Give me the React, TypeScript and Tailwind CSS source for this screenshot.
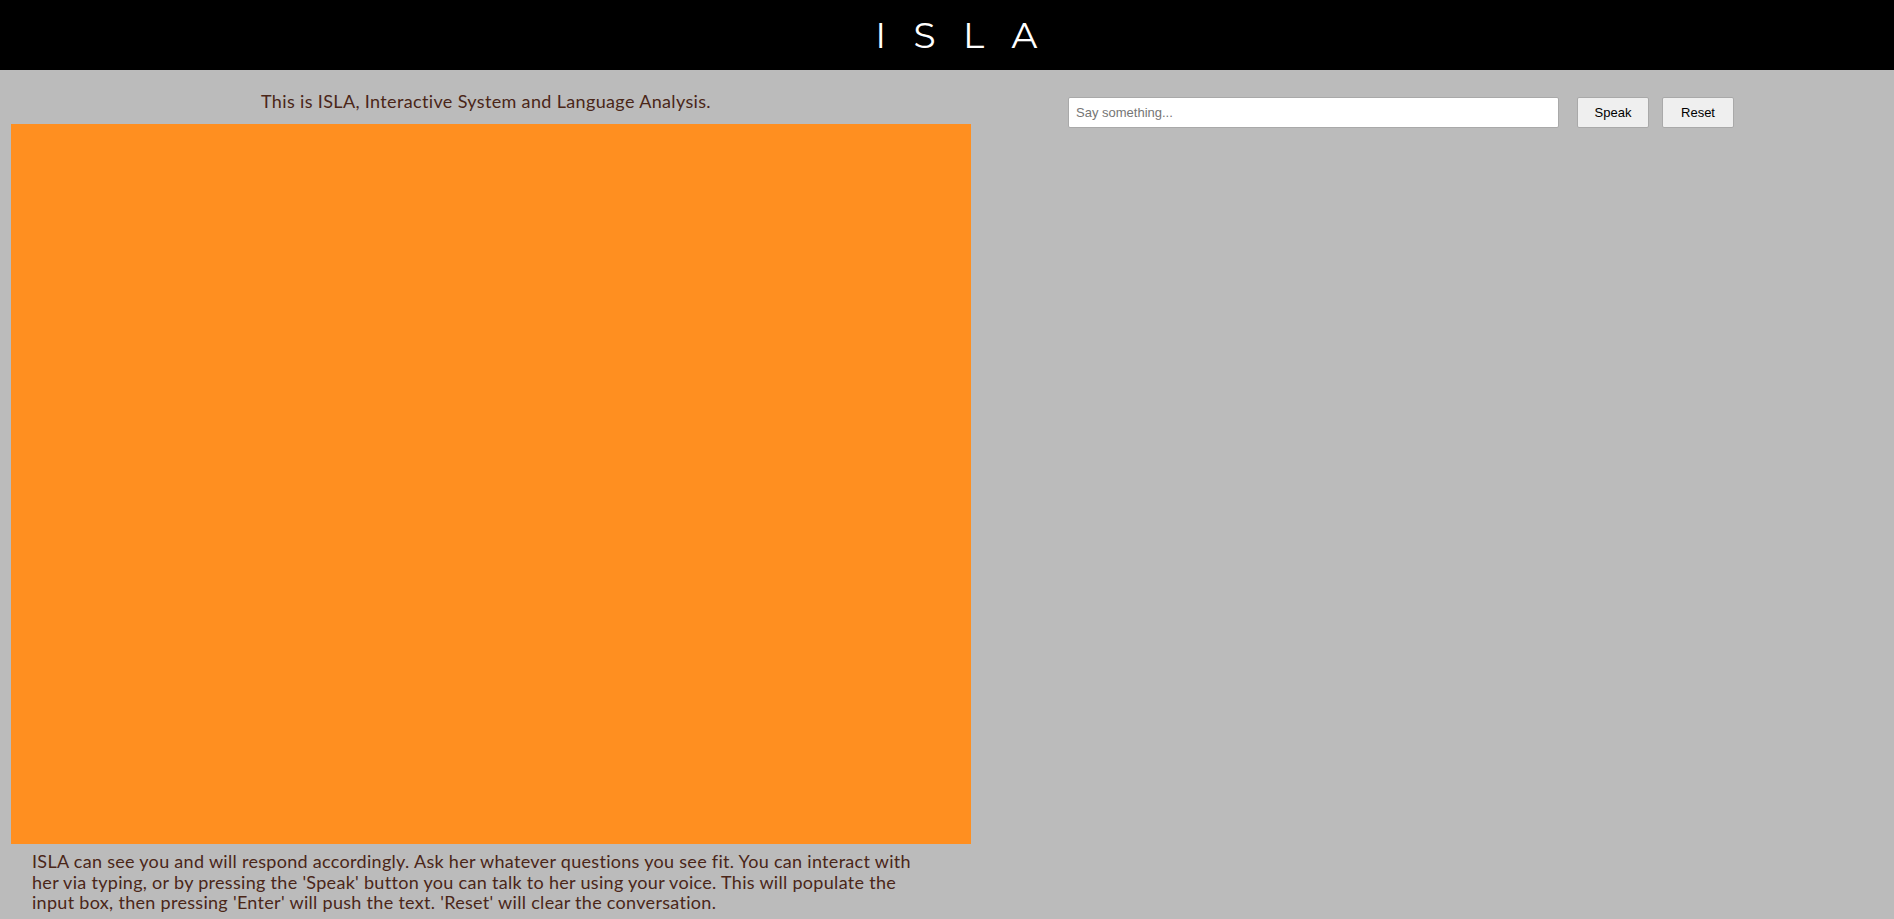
import { useState } from "react";

export default function App() {
  const [message, setMessage] = useState("");

  return (
    <div className="min-h-[919px] bg-[#bbbbbb] font-['Lato',sans-serif] text-[#4a2618]">
      {/* Header */}
      <header className="flex h-[70px] items-center justify-center bg-black">
        <h1 className="pl-[46px] text-[36px] font-normal leading-none tracking-[0.76em] text-white font-['Montserrat','Lato',sans-serif]">
          ISLA
        </h1>
      </header>

      <div className="flex">
        {/* Left: camera view */}
        <div className="w-[982px] pl-[11px]">
          <p className="flex h-[54px] w-[960px] items-end justify-center pb-[13px] pr-[10px] text-[18px] leading-[20px] tracking-[0.35px]">
            This is ISLA, Interactive System and Language Analysis.
          </p>
          <div className="h-[720px] w-[960px] bg-[#ff8f20]" />
          <p className="mt-[7px] w-[905px] pl-[21px] text-[18px] leading-[20.5px] tracking-[0.3px]">
            ISLA can see you and will respond accordingly. Ask her whatever questions you see fit. You can
            interact with her via typing, or by pressing the 'Speak' button you can talk to her using your
            voice. This will populate the input box, then pressing 'Enter' will push the text. 'Reset' will
            clear the conversation.
          </p>
        </div>

        {/* Right: conversation controls */}
        <div className="flex items-start pl-[86px] pt-[27px] font-['Liberation_Sans',Arial,sans-serif]">
          <input
            value={message}
            onChange={(e) => setMessage(e.target.value)}
            placeholder="Say something..."
            className="h-[31px] w-[491px] rounded-[2px] border border-[#a9a9a9] bg-white px-[7px] text-[13px] text-black outline-none placeholder:text-[#757575]"
          />
          <button className="ml-[18px] h-[31px] w-[72px] rounded-[2px] border border-[#a9a9a9] bg-[#efefef] text-[13px] text-black">
            Speak
          </button>
          <button className="ml-[13px] h-[31px] w-[72px] rounded-[2px] border border-[#a9a9a9] bg-[#efefef] text-[13px] text-black">
            Reset
          </button>
        </div>
      </div>
    </div>
  );
}
